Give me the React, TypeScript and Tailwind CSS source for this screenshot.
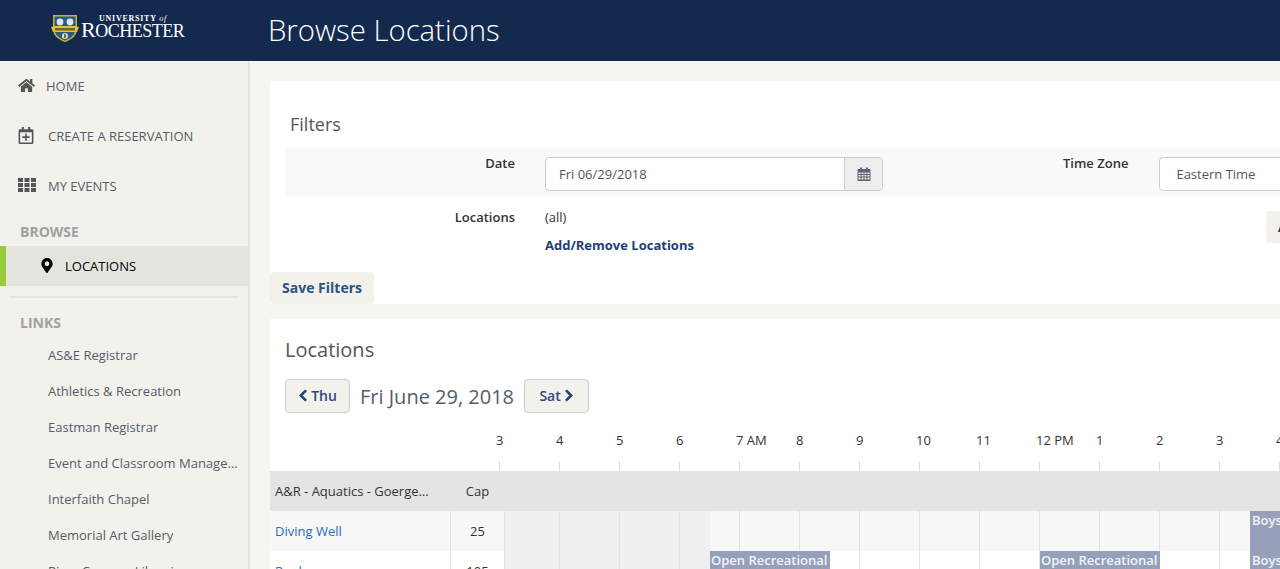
import React from "react";
import { FaHome, FaRegCalendarPlus, FaMapMarkerAlt, FaChevronLeft, FaChevronRight } from "react-icons/fa";

const links = ["AS&E Registrar", "Athletics & Recreation", "Eastman Registrar", "Event and Classroom Management", "Interfaith Chapel", "Memorial Art Gallery", "River Campus Libraries"];
const hours = ["3", "4", "5", "6", "7 AM", "8", "9", "10", "11", "12 PM", "1", "2", "3", "4"];

function Crest() {
  return (
    <svg width="28" height="29" viewBox="0 0 28 29" className="shrink-0">
      <path d="M2 1h24v14c0 7-6 11-12 13C8 26 2 22 2 15z" fill="#c9b037" />
      <path d="M3.500 2.500h21V15c0 6-5.500 9.800-10.500 11.500C9 24.800 3.500 21 3.500 15z" fill="#2a5a86" />
      <circle cx="9" cy="8" r="3.400" fill="#dfe6ea" />
      <circle cx="19" cy="8" r="3.400" fill="#dfe6ea" />
      <path d="M0 13l4-1h20l4 1-2 5H2z" fill="#e0c52c" />
      <path d="M4 14h20v2.500H4z" fill="#6c6a1e" />
      <circle cx="14" cy="22" r="3" fill="#e8e2a8" />
      <path d="M14 20v4" stroke="#1e4166" strokeWidth="1.400" />
    </svg>
  );
}

function CalendarIcon() {
  return (
    <svg width="14" height="14" viewBox="0 0 14 14">
      <path d="M0.500 2h13v12h-13z" fill="#5a6473" />
      <path d="M3 0.500h2v3H3zM9 0.500h2v3H9z" fill="#5a6473" />
      <path d="M1.500 5.500h2v1.500h-2zM4.500 5.500h2v1.500h-2zM7.500 5.500h2v1.500h-2zM10.500 5.500h2v1.500h-2zM1.500 8h2v1.500h-2zM4.500 8h2v1.500h-2zM7.500 8h2v1.500h-2zM10.500 8h2v1.500h-2zM1.500 10.500h2V12.500h-2zM4.500 10.500h2V12.500h-2zM7.500 10.500h2V12.500h-2zM10.500 10.500h2V12.500h-2z" fill="#eeeeee" />
    </svg>
  );
}

function ThIcon() {
  return (
    <svg width="18" height="14" viewBox="0 0 18 14" className="shrink-0 -mt-[3px]" fill="#555555">
      <path d="M0 0h5v4H0zM6.500 0h5v4h-5zM13 0h5v4h-5zM0 5h5v4H0zM6.500 5h5v4h-5zM13 5h5v4h-5zM0 10h5v4H0zM6.500 10h5v4h-5zM13 10h5v4h-5z" />
    </svg>
  );
}

function GridCells() {
  return (
    <div className="flex h-full">
      <div className="w-[55px] h-full border-l border-[#e2e2e2]" />
      {Array.from({ length: 13 }).map((_, i) => (
        <div key={i} className="w-[60px] h-full border-l border-[#e2e2e2]" />
      ))}
    </div>
  );
}

export default function App() {
  return (
    <div className="w-[1280px] h-[569px] overflow-hidden flex flex-col bg-[#f6f6f1] text-[13px] text-[#333333]" style={{ fontFamily: '"Open Sans", sans-serif' }}>
      <header className="h-[61px] shrink-0 bg-[#132a4e] flex items-start">
        <div className="w-[268px] shrink-0 pl-[51px] pt-[14px] flex items-start gap-[2px]">
          <Crest />
          <div className="text-white leading-none" style={{ fontFamily: '"Liberation Serif", serif' }}>
            <div className="text-[8px] font-bold tracking-[0.75px] pl-[18px] h-[9px] leading-[9px] whitespace-nowrap">UNIVERSITY <i className="font-normal">of</i></div>
            <div className="text-[22px] leading-[19px] tracking-[-0.5px] whitespace-nowrap -mt-[3px]">R<span className="text-[18px]">OCHESTER</span></div>
          </div>
        </div>
        <h1 className="text-[29.3px] leading-[60px] text-white font-light whitespace-nowrap">Browse Locations</h1>
      </header>
      <div className="flex flex-1 min-h-0">
        <aside className="w-[250px] shrink-0 bg-[#f2f1eb] border-r-2 border-[#e4e4df] text-[13px] text-[#555d6b] overflow-hidden">
          <div className="flex items-center h-[50px] pl-[18px] pt-[1px]"><FaHome className="w-[17px] h-[15px] text-[#555555] -mt-[3px]" /><span className="ml-[11px]">HOME</span></div>
          <div className="flex items-center h-[50px] pl-[18px] pt-[1px]"><FaRegCalendarPlus className="w-[16px] h-[17px] text-[#555555] -mt-[3px]" /><span className="ml-[14px]">CREATE A RESERVATION</span></div>
          <div className="flex items-center h-[50px] pl-[18px] pt-[1px]"><ThIcon /><span className="ml-[12px]">MY EVENTS</span></div>
          <div className="h-[35px] pl-[20px] pt-[11px] text-[14px] leading-[19px] font-bold text-[#a0a0a0]">BROWSE</div>
          <div className="h-[40px] flex items-center bg-[#e4e4df] border-l-[6px] border-[#98cc3a] pl-[35px] text-black">
            <FaMapMarkerAlt className="w-[12px] h-[15px] -mt-[1px]" /><span className="ml-[12px] pt-[1px]">LOCATIONS</span>
          </div>
          <div className="mx-[9px] mt-[10px] h-[2px] bg-[#e4e4df]" />
          <div className="h-[38px] pl-[20px] pt-[15px] text-[14px] leading-[19px] font-bold text-[#a0a0a0]">LINKS</div>
          <div className="mt-[2px]">
            {links.map((t) => (
              <div key={t} className="h-[36px] pl-[48px] pr-[8px] flex items-center">
                <span className="truncate">{t}</span>
              </div>
            ))}
          </div>
        </aside>
        <main className="flex-1 min-w-0 pl-[20px] pt-[20px] overflow-hidden">
          <section className="w-[1100px] h-[223px] bg-white relative">
            <h2 className="pl-[20px] pt-[31px] text-[18px] leading-[25px] text-[#555555]">Filters</h2>
            <div className="ml-[15px] mt-[10px] h-[49px] bg-[#f9f9f9] flex items-start">
              <div className="w-[230px] shrink-0 pt-[7px] text-right font-semibold leading-[19px]">Date</div>
              <div className="ml-[30px] mt-[10px] flex shrink-0 h-[34px] w-[338px] border border-[#cccccc] rounded-[4px] bg-white">
                <div className="flex-1 flex items-center pl-[13px] pt-[1px] text-[#555555]">Fri 06/29/2018</div>
                <div className="w-[38px] bg-[#eeeeee] border-l border-[#cccccc] rounded-r-[4px] flex items-center justify-center"><CalendarIcon /></div>
              </div>
              <div className="ml-[180px] shrink-0 pt-[7px] font-semibold leading-[19px] whitespace-nowrap">Time Zone</div>
              <div className="ml-[31px] mt-[10px] shrink-0 h-[34px] w-[300px] border border-[#cccccc] rounded-[4px] bg-white flex items-center pl-[16px] pt-[1px] text-[#555555]">Eastern Time</div>
            </div>
            <div className="ml-[15px] flex items-start">
              <div className="w-[230px] shrink-0 pt-[12px] text-right font-semibold leading-[19px]">Locations</div>
              <div className="ml-[30px] pt-[12px]">
                <div className="leading-[19px]">(all)</div>
                <div className="mt-[9px] leading-[19px] font-bold text-[#1f3f77]">Add/Remove Locations</div>
              </div>
            </div>
            <div className="absolute left-[996px] top-[130px] h-[32px] w-[60px] bg-[#f2f1eb] rounded-[4px] pl-[12px] leading-[32px] font-bold text-[#333333]">Add</div>
            <button className="absolute left-0 bottom-0 h-[32px] w-[104px] bg-[#f2f1eb] rounded-[4px] pb-[2px] text-[14px] font-bold text-[#2c5285]">Save Filters</button>
          </section>
          <section className="w-[1100px] mt-[15px] bg-white h-[300px]">
            <h2 className="pl-[15px] pt-[17px] text-[20px] leading-[27px] text-[#555555]">Locations</h2>
            <div className="ml-[15px] mt-[16px] h-[34px] flex items-center">
              <button className="h-[34px] w-[65px] border border-[#cccccc] rounded-[4px] bg-[#f2f1eb] flex items-center justify-center gap-[3px] pb-[2px] text-[14px] font-semibold text-[#2c4a7c]"><FaChevronLeft className="w-[10px] h-[13px] text-[#1f3f77]" stroke="currentColor" strokeWidth={30} />Thu</button>
              <span className="ml-[10px] pt-[2px] text-[20px] text-[#555d6b] whitespace-nowrap">Fri June 29, 2018</span>
              <button className="ml-[10px] h-[34px] w-[65px] border border-[#cccccc] rounded-[4px] bg-[#f2f1eb] flex items-center justify-center gap-[3px] pb-[2px] text-[14px] font-semibold text-[#2c4a7c]">Sat<FaChevronRight className="w-[10px] h-[13px] text-[#1f3f77]" stroke="currentColor" strokeWidth={30} /></button>
            </div>
            <div className="flex h-[42px] mt-[16px] pl-[226px]">
              {hours.map((h, i) => (
                <div key={i} className="w-[60px] shrink-0 text-left leading-[19px] pt-[2px] text-[#333333] whitespace-nowrap">{h}</div>
              ))}
            </div>
            <div className="flex h-[10px] pl-[229px] -mt-[10px]">
              {hours.map((_, i) => (
                <div key={i} className="w-[60px] shrink-0 h-full border-l border-[#dddddd]" />
              ))}
            </div>
            <div className="flex h-[40px] bg-[#e4e4e4] items-center pt-[1px]">
              <div className="w-[180px] shrink-0 pl-[5px] pr-[20px] truncate">A&amp;R - Aquatics - Goergen Athletic Center</div>
              <div className="w-[54px] shrink-0 pl-[1px] text-center">Cap</div>
            </div>
            <div className="flex h-[40px] bg-[#f7f7f7] relative">
              <div className="w-[180px] pl-[5px] pt-[1px] flex items-center text-[#2a6db5]">Diving Well</div>
              <div className="w-[54px] border-l border-[#e2e2e2] pt-[1px] flex items-center justify-center">25</div>
              <div className="relative flex-1">
                <div className="absolute left-0 top-0 h-full w-[206px] bg-[#eff0ef]" />
                <div className="absolute inset-0"><GridCells /></div>
                <div className="absolute left-[746px] top-0 h-[80px] w-[60px] bg-[#96a0bb] px-[2px] text-[13px] leading-[19px] font-semibold text-[#f2f3f7] overflow-hidden">Boys</div>
              </div>
            </div>
            <div className="flex h-[40px] bg-white">
              <div className="w-[180px] pl-[5px] pt-[11px] text-[#2a6db5]">Pool</div>
              <div className="w-[54px] border-l border-[#e2e2e2] pt-[11px] text-center">105</div>
              <div className="relative flex-1">
                <div className="absolute left-0 top-0 h-full w-[206px] bg-[#eff0ef]" />
                <div className="absolute inset-0"><GridCells /></div>
                <div className="absolute left-[206px] top-0 h-[40px] w-[120px] bg-[#96a0bb] px-[1px] text-[13px] leading-[19px] font-semibold text-[#f2f3f7] overflow-hidden whitespace-nowrap">Open Recreational</div>
                <div className="absolute left-[536px] top-0 h-[40px] w-[120px] bg-[#96a0bb] px-[1px] text-[13px] leading-[19px] font-semibold text-[#f2f3f7] overflow-hidden whitespace-nowrap">Open Recreational</div>
                <div className="absolute left-[746px] top-0 h-[40px] w-[60px] bg-[#96a0bb] px-[2px] text-[13px] leading-[19px] font-semibold text-[#f2f3f7] overflow-hidden">Boys</div>
              </div>
            </div>
          </section>
        </main>
      </div>
    </div>
  );
}
